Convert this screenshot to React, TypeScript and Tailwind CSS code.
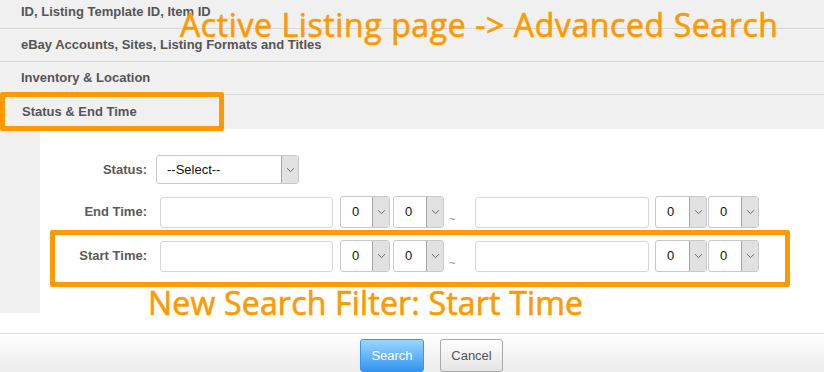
import React from "react";

function Chevron() {
  return (
    <svg width="9" height="6" viewBox="0 0 9 6" fill="none">
      <path d="M1 1.2 L4.5 4.6 L8 1.2" stroke="#6b6b6b" strokeWidth="1" />
    </svg>
  );
}

function Sel({ text, w, h, arrowW = 17, pl = 11 }: { text: string; w: string; h: string; arrowW?: number; pl?: number }) {
  return (
    <div className={`flex ${w} ${h} border border-[#c9c9c9] rounded-[3px] bg-white overflow-hidden`}>
      <div className="flex-1 flex items-center text-[13px] text-[#111]" style={{ paddingLeft: pl }}>
        {text}
      </div>
      <div
        className="flex items-center justify-center bg-[#e1e1e1] border-l border-[#a6a6a6]"
        style={{ width: arrowW }}
      >
        <Chevron />
      </div>
    </div>
  );
}

function TimeRow({ label }: { label: string }) {
  return (
    <div className="flex items-center h-[32px]">
      <div className="w-[107px] text-right text-[13px] font-bold text-[#5a5a5a]">{label}</div>
      <div className="ml-[13px] w-[173px] h-[31px] border border-[#d6d6d6] rounded-[3px] bg-white" />
      <div className="ml-[7px]">
        <Sel text="0" w="w-[50px]" h="h-[32px]" />
      </div>
      <div className="ml-[3px]">
        <Sel text="0" w="w-[51px]" h="h-[32px]" />
      </div>
      <div className="w-[31px] self-end pl-[5px] pb-[3px] text-[11px] text-[#888] leading-none">~</div>
      <div className="w-[174px] h-[31px] border border-[#d6d6d6] rounded-[3px] bg-white" />
      <div className="ml-[6px]">
        <Sel text="0" w="w-[52px]" h="h-[32px]" />
      </div>
      <div className="ml-[1px]">
        <Sel text="0" w="w-[51px]" h="h-[32px]" />
      </div>
    </div>
  );
}

export default function App() {
  const rowCls =
    "flex items-center pl-[21px] text-[13px] font-bold text-[#555] border-b border-[#d8d8d8]";
  return (
    <div className="relative w-[824px] h-[372px] overflow-hidden bg-white font-['Liberation_Sans',Arial,sans-serif]">
      <div className="bg-[#f0f0f0]">
        <div className={`${rowCls} -mt-[4px] h-[33px]`}>ID, Listing Template ID, Item ID</div>
        <div className={`${rowCls} h-[33px]`}>eBay Accounts, Sites, Listing Formats and Titles</div>
        <div className={`${rowCls} h-[33px]`}>Inventory &amp; Location</div>
        <div className="flex items-center pl-[22px] h-[34px] text-[13px] font-bold text-[#555]">
          Status &amp; End Time
        </div>
      </div>

      <div className="flex h-[204px]">
        <div className="w-[40px] h-[184px] bg-[#f0f0f0]" />
        <div className="flex-1 pt-[26px] flex flex-col gap-[12px]">
          <div className="flex items-center h-[29px]">
            <div className="w-[107px] text-right text-[13px] font-bold text-[#5a5a5a]">Status:</div>
            <div className="ml-[9px]">
              <Sel text="--Select--" w="w-[143px]" h="h-[29px]" pl={10} />
            </div>
          </div>
          <TimeRow label="End Time:" />
          <TimeRow label="Start Time:" />
        </div>
      </div>

      <div className="h-[39px] border-t border-[#dadada] bg-gradient-to-b from-white to-[#ececec] flex justify-center items-start pt-[5px] pl-[39px] gap-[16px]">
        <button className="w-[64px] h-[33px] rounded-[3px] border border-[#3a96e4] bg-gradient-to-b from-[#9ad6ff] to-[#2e95ef] text-white text-[13px]">
          Search
        </button>
        <button className="w-[63px] h-[33px] rounded-[3px] border border-[#a9a9a9] bg-gradient-to-b from-white to-[#e4e4e4] text-[#555] text-[13px]">
          Cancel
        </button>
      </div>

      {/* annotations */}
      <div className="absolute left-0 top-[92px] w-[224px] h-[39px] border-[5px] border-[#ff9900] rounded-[2px]" />
      <div className="absolute left-[50px] top-[230px] w-[740px] h-[57px] border-[5px] border-[#ff9900] rounded-[2px]" />
      <div className="absolute left-[180px] top-[5px] text-[32px] leading-[40px] tracking-[0.6px] text-[#ff9900] [-webkit-text-stroke:0.6px_#ff9900] font-['Open_Sans',sans-serif] whitespace-nowrap">
        Active Listing page -&gt; Advanced Search
      </div>
      <div className="absolute left-[148px] top-[283px] text-[32px] leading-[40px] tracking-[0.2px] text-[#ff9900] [-webkit-text-stroke:0.6px_#ff9900] font-['Open_Sans',sans-serif] whitespace-nowrap">
        New Search Filter: Start Time
      </div>
    </div>
  );
}
